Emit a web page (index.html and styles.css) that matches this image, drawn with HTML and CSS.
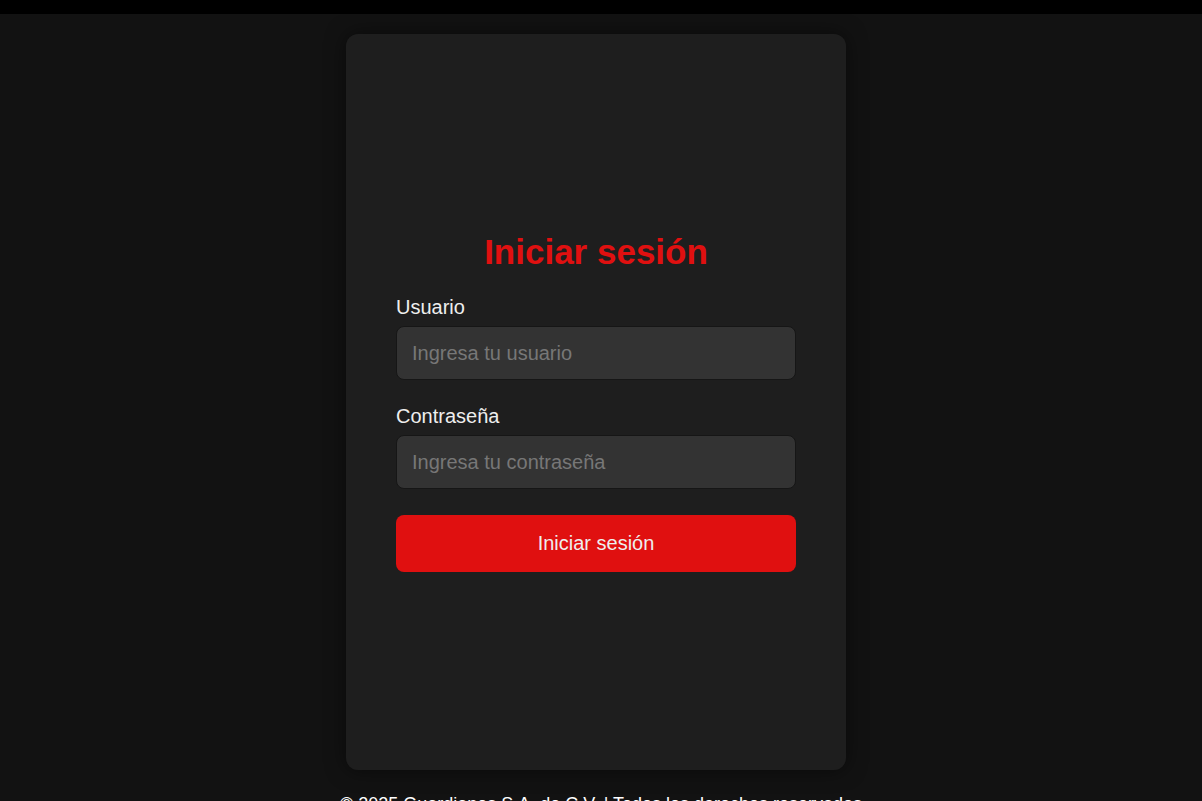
FILE: index.html
```html
<!DOCTYPE html>
<html lang="es">
<head>
	<meta charset="utf-8">
	<title>Iniciar sesión</title>
	<link rel="stylesheet" href="styles.css">
</head>
<body>
<div class="topbar"></div>
<main class="wrap">
	<div class="card">
		<form class="login">
			<h1>Iniciar sesión</h1>
			<div class="group">
				<label for="user">Usuario</label>
				<input id="user" type="text" placeholder="Ingresa tu usuario">
			</div>
			<div class="group">
				<label for="pass">Contraseña</label>
				<input id="pass" type="password" placeholder="Ingresa tu contraseña">
			</div>
			<button type="button" class="btn">Iniciar sesión</button>
		</form>
	</div>
</main>
<footer class="foot">© 2025 Guardianes S.A. de C.V. | Todos los derechos reservados</footer>
</body>
</html>
```

FILE: styles.css
```css
html, body{
	margin: 0;
	padding: 0;
}
body{
	background: #121212;
	color: #eee;
	font-family: "Liberation Sans", Arial, sans-serif;
}
.topbar{
	height: 14px;
	background: #000;
}
.wrap{
	display: flex;
	justify-content: center;
	padding: 20px 10px 0 0;
}
.card{
	width: 500px;
	height: 736px;
	box-sizing: border-box;
	padding: 0 50px;
	background: #1e1e1e;
	border-radius: 12px;
	box-shadow: 0 0 20px rgba(0,0,0,0.5);
	display: flex;
	flex-direction: column;
	justify-content: center;
}
.login h1{
	margin: 0 0 24px;
	line-height: 40px;
	text-align: center;
	color: #e01010;
	font-size: 35px;
	font-weight: bold;
}
.group{
	margin-bottom: 25px;
}
.group label{
	display: block;
	margin-bottom: 7px;
	line-height: 23px;
	font-size: 20px;
	color: #eee;
}
.group input{
	display: block;
	width: 100%;
	height: 54px;
	box-sizing: border-box;
	padding: 0 15px;
	background: #333;
	border: 1px solid #161616;
	border-radius: 8px;
	color: #eee;
	font-family: inherit;
	font-size: 20px;
	outline: none;
}
.group input::placeholder{
	color: #777;
}
.btn{
	display: block;
	width: 100%;
	height: 57px;
	margin-top: 26px;
	background: #e01010;
	border: none;
	border-radius: 8px;
	color: #eee;
	font-family: inherit;
	font-size: 20px;
	cursor: pointer;
}
.foot{
	padding: 24px 0 20px;
	line-height: 20px;
	text-align: center;
	font-size: 18px;
	color: #fff;
}
```
